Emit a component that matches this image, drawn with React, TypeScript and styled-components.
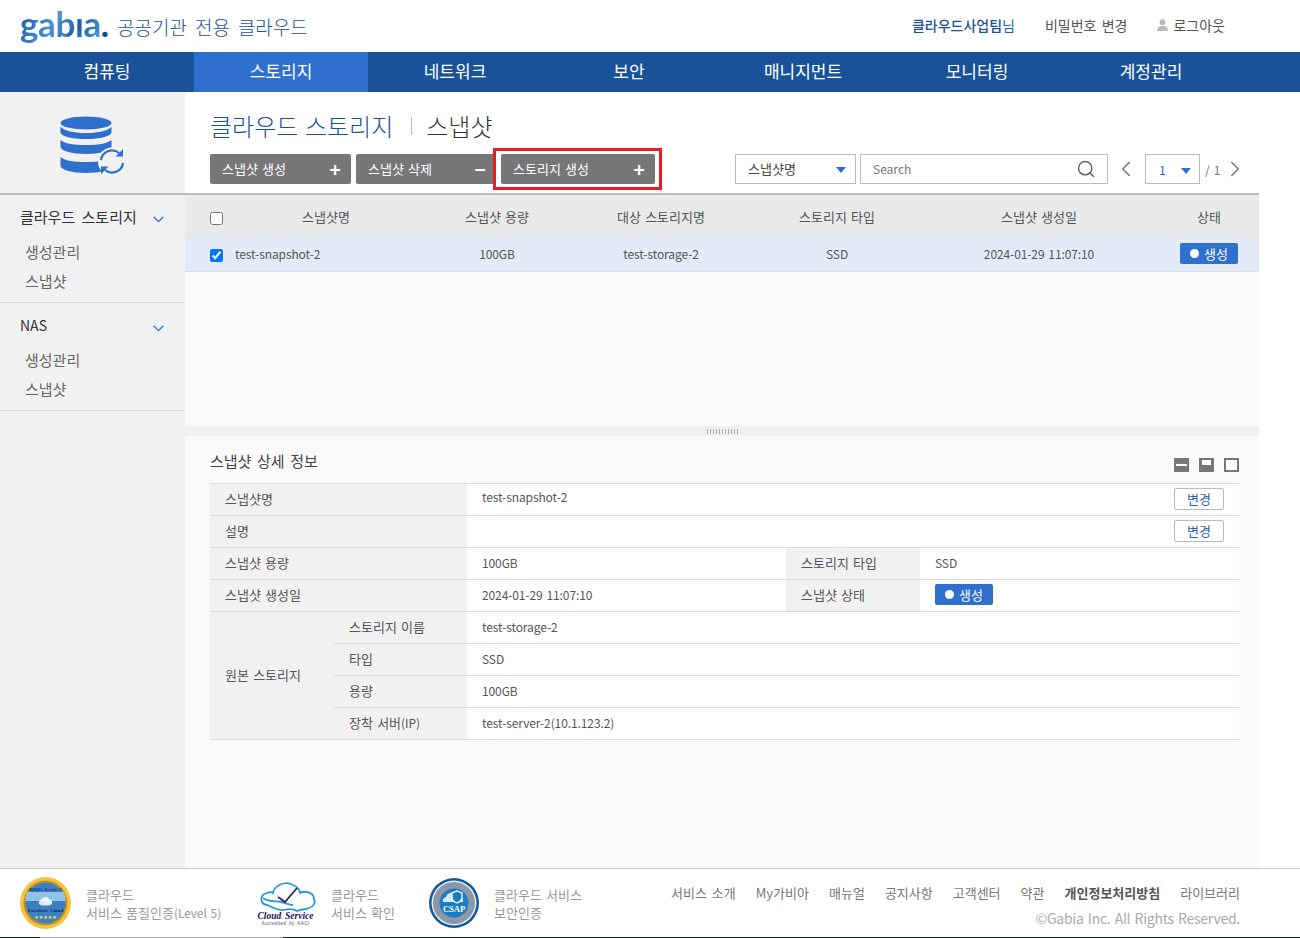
import styled, { createGlobalStyle } from "styled-components";
import { ChevronLeft, ChevronRight, Search } from "lucide-react";

const menus = ["컴퓨팅", "스토리지", "네트워크", "보안", "매니지먼트", "모니터링", "계정관리"];
const sideGroups = ["클라우드 스토리지", "NAS"];
const footerLinks = ["서비스 소개", "My가비아", "매뉴얼", "공지사항", "고객센터", "약관", "개인정보처리방침", "라이브러리"];

const App = () => {
  return (
    <Page>
      <GlobalStyle />
      <Header>
        <Logo>
          <LogoWord>gabıa</LogoWord>
          <LogoDot>.</LogoDot>
        </Logo>
        <SiteName>공공기관 전용 클라우드</SiteName>
        <UserMenu>
          <UserName>
            <b>클라우드사업팀</b>님
          </UserName>
          <UserLink>비밀번호 변경</UserLink>
          <UserLink>
            <UserIcon />
            로그아웃
          </UserLink>
        </UserMenu>
      </Header>

      <Nav>
        {menus.map((menu) => (
          <NavItem key={menu} $active={menu === "스토리지"}>
            {menu}
          </NavItem>
        ))}
      </Nav>

      <Body>
        <Sidebar>
          <SideTop>
            <StorageIcon />
          </SideTop>
          {sideGroups.map((group) => (
            <SideGroup key={group}>
              <SideTitle $latin={group === "NAS"}>
                {group}
                <SideChevron viewBox="0 0 11 7">
                  <path d="M.7.8 5.5 5.6 10.3.8" />
                </SideChevron>
              </SideTitle>
              <SideItem>생성관리</SideItem>
              <SideItem>스냅샷</SideItem>
            </SideGroup>
          ))}
        </Sidebar>

        <Main>
          <TopBar>
            <PageTitle>
              클라우드 스토리지<TitleBar />
              <TitleCurrent>스냅샷</TitleCurrent>
            </PageTitle>
            <Toolbar>
              <ActionButton>
                스냅샷 생성<ActionSign>+</ActionSign>
              </ActionButton>
              <ActionButton>
                스냅샷 삭제<ActionSign>−</ActionSign>
              </ActionButton>
              <ActionButton $wide $marked>
                스토리지 생성<ActionSign>+</ActionSign>
              </ActionButton>
              <SearchType>
                스냅샷명
                <Caret />
              </SearchType>
              <SearchBox>
                <SearchInput placeholder="Search" />
                <Search size={20} color="#666" strokeWidth={1.8} />
              </SearchBox>
              <PagerArrow $left>
                <ChevronLeft size={26} strokeWidth={1.4} />
              </PagerArrow>
              <PageSelect>
                <Latin>1</Latin>
                <Caret />
              </PageSelect>
              <PageTotal>/ 1</PageTotal>
              <PagerArrow>
                <ChevronRight size={26} strokeWidth={1.4} />
              </PagerArrow>
            </Toolbar>
          </TopBar>

          <ListPane>
            <HeadRow>
              <CheckCell>
                <input type="checkbox" />
              </CheckCell>
              <span>스냅샷명</span>
              <span>스냅샷 용량</span>
              <span>대상 스토리지명</span>
              <span>스토리지 타입</span>
              <span>스냅샷 생성일</span>
              <span>상태</span>
            </HeadRow>
            <DataRow>
              <CheckCell>
                <input type="checkbox" defaultChecked />
              </CheckCell>
              <NameCell>test-snapshot-2</NameCell>
              <Latin>100GB</Latin>
              <Latin>test-storage-2</Latin>
              <Latin>SSD</Latin>
              <Latin>2024-01-29 11:07:10</Latin>
              <span>
                <StatusBadge>생성</StatusBadge>
              </span>
            </DataRow>
          </ListPane>

          <Splitter>
            <SplitterDots />
          </Splitter>

          <DetailPane>
            <DetailHead>
              <DetailTitle>스냅샷 상세 정보</DetailTitle>
              <PaneButtons>
                <PaneIcon viewBox="0 0 15 14">
                  <path d="M0 0h15v14H0z" fill="#777" />
                  <path d="M2 6h11v2H2z" fill="#fff" />
                </PaneIcon>
                <PaneIcon viewBox="0 0 15 14">
                  <path d="M0 0h15v14H0z" fill="#777" />
                  <path d="M3 2h9v5H3z" fill="#fff" />
                </PaneIcon>
                <PaneIcon viewBox="0 0 15 14">
                  <path d="M0 0h15v14H0z" fill="#777" />
                  <path d="M2 2h11v10H2z" fill="#fff" />
                </PaneIcon>
              </PaneButtons>
            </DetailHead>
            <DetailTable>
              <colgroup>
                <col width={123} />
                <col width={134} />
                <col width={319} />
                <col width={134} />
                <col width={319} />
              </colgroup>
              <tbody>
                <tr>
                  <th colSpan={2}>스냅샷명</th>
                  <td colSpan={3}>
                    <ValueLine>
                      <TopValue>test-snapshot-2</TopValue>
                      <ChangeButton>변경</ChangeButton>
                    </ValueLine>
                  </td>
                </tr>
                <tr>
                  <th colSpan={2}>설명</th>
                  <td colSpan={3}>
                    <ValueLine>
                      <span />
                      <ChangeButton>변경</ChangeButton>
                    </ValueLine>
                  </td>
                </tr>
                <tr>
                  <th colSpan={2}>스냅샷 용량</th>
                  <td>
                    <Latin>100GB</Latin>
                  </td>
                  <th>스토리지 타입</th>
                  <td>
                    <Latin>SSD</Latin>
                  </td>
                </tr>
                <tr>
                  <th colSpan={2}>스냅샷 생성일</th>
                  <td>
                    <Latin>2024-01-29 11:07:10</Latin>
                  </td>
                  <th>스냅샷 상태</th>
                  <td>
                    <StatusBadge>생성</StatusBadge>
                  </td>
                </tr>
                <tr>
                  <th rowSpan={4}>원본 스토리지</th>
                  <SubHead>스토리지 이름</SubHead>
                  <td colSpan={3}>
                    <Latin>test-storage-2</Latin>
                  </td>
                </tr>
                <tr>
                  <SubHead>타입</SubHead>
                  <td colSpan={3}>
                    <Latin>SSD</Latin>
                  </td>
                </tr>
                <tr>
                  <SubHead>용량</SubHead>
                  <td colSpan={3}>
                    <Latin>100GB</Latin>
                  </td>
                </tr>
                <tr>
                  <SubHead>
                    장착 서버<Latin>(IP)</Latin>
                  </SubHead>
                  <td colSpan={3}>
                    <Latin>test-server-2(10.1.123.2)</Latin>
                  </td>
                </tr>
              </tbody>
            </DetailTable>
          </DetailPane>
        </Main>
      </Body>

      <Footer>
        <Cert $width={235}>
          <QualityBadge />
          <CertText>
            클라우드
            <br />
            서비스 품질인증<Latin>(Level 5)</Latin>
          </CertText>
        </Cert>
        <Cert $width={174}>
          <CloudServiceBadge />
          <CertText>
            클라우드
            <br />
            서비스 확인
          </CertText>
        </Cert>
        <Cert $width={220}>
          <CsapBadge />
          <CertText>
            클라우드 서비스
            <br />
            보안인증
          </CertText>
        </Cert>
        <FooterRight>
          <FooterLinks>
            {footerLinks.map((link) => (
              <FooterLink key={link} $strong={link === "개인정보처리방침"}>
                {link}
              </FooterLink>
            ))}
          </FooterLinks>
          <Copyright>©Gabia Inc. All Rights Reserved.</Copyright>
        </FooterRight>
      </Footer>
      <BottomEdge />
    </Page>
  );
};

export default App;

const UserIcon = () => (
  <UserGlyph viewBox="0 0 11 12">
    <circle cx="5.5" cy="3.2" r="2.9" />
    <path d="M0 12c0-3.4 2-5 5.5-5S11 8.600 11 12z" />
  </UserGlyph>
);

const StorageIcon = () => (
  <svg width="66" height="60" viewBox="0 0 66 60">
    <g fill="#2f6fce">
      <ellipse cx="26" cy="7" rx="25.500" ry="6.500" />
      <path d="M.5 10.500c3 4 12 6.500 25.500 6.500s22.500-2.500 25.500-6.500v6c-1 4-11 6.500-25.500 6.500S1.500 20.500.5 16.500z" />
      <path d="M.5 24c3 3 12 5 25.500 5s22.500-2 25.500-5v7c-1 4-11 7-25.500 7S1.500 35 .5 31z" />
      <path d="M.5 41c3 3 12 5 25.500 5s22.500-2 25.500-5v9c-1 4-11 7-25.500 7S1.500 54 .5 50z" />
    </g>
    <circle cx="52" cy="45.500" r="14" fill="#f1f1f1" />
    <g fill="none" stroke="#2f6fce" strokeWidth="2.200">
      <path d="M41 44a11 11 0 0 1 18-7" />
      <path d="M63 47a11 11 0 0 1-18 7" />
    </g>
    <path d="M63 33v7.500h-7.500zM41 58v-7.500h7.500z" fill="#2f6fce" />
  </svg>
);

const QualityBadge = () => (
  <svg width="51" height="52" viewBox="0 0 51 52">
    <ellipse cx="25.500" cy="26" rx="25.500" ry="26" fill="#f3c53c" />
    <ellipse cx="25.500" cy="26" rx="22" ry="22.500" fill="#c98f1c" />
    <ellipse cx="25.500" cy="26" rx="20" ry="20.500" fill="#3b7fc4" />
    <path d="M7 15h37a20 20 0 0 1 1.500 9H5.500a20 20 0 0 1 1.500-9z" fill="#8fc3e8" />
    <text x="25.500" y="14" textAnchor="middle" fontSize="5" fontFamily="Liberation Serif" fontWeight="700" fill="#12306a">
      KIQC Level 5
    </text>
    <path d="M19 27a4 4 0 0 1 3-5 4 4 0 0 1 7 0 4 4 0 0 1 3 5c-2 2-11 2-13 0z" fill="#fff" opacity=".85" />
    <text x="25.500" y="35" textAnchor="middle" fontSize="5" fontFamily="Liberation Serif" fontWeight="700" fill="#0e2a5e">
      Excellent Cloud
    </text>
    <text x="25.500" y="42" textAnchor="middle" fontSize="5" fill="#ffe34a" fontFamily="DejaVu Sans">
      ★★★★★
    </text>
  </svg>
);

const CloudServiceBadge = () => (
  <svg width="61" height="46" viewBox="0 0 61 46">
    <g fill="none" stroke="#2a9ad6" strokeWidth="1.800" transform="translate(4 1)">
      <path d="M8 24c-7-1-8-10 0-12 2-1 5-1 6 0 1-7 12-13 20-8 5 2 7 6 7 8 6-3 14 0 14 6 2 4-1 8-5 9-3 2-9 1-12 3-5-3-9-2-13-1-5 1-12-3-17-5z" />
      <path d="M4 17c5 4 12 3 18 4 5 1 8 3 12 3" />
    </g>
    <path d="M23 17l7 5L42 8" fill="none" stroke="#2d1f6e" strokeWidth="1.700" />
    <text x="30.500" y="39" textAnchor="middle" fontSize="9.500" fontFamily="Liberation Serif" fontStyle="italic" fontWeight="700" fill="#20135f">
      Cloud Service
    </text>
    <text x="30.500" y="45" textAnchor="middle" fontSize="4.600" fontFamily="Liberation Sans" fill="#555" letterSpacing=".3">
      Accredited by KACI
    </text>
  </svg>
);

const CsapBadge = () => (
  <svg width="50" height="50" viewBox="0 0 50 50">
    <circle cx="25" cy="25" r="25" fill="#12579f" />
    <circle cx="25" cy="25" r="22.500" fill="#e6ebf1" />
    <circle cx="25" cy="25" r="21" fill="#8d98a6" />
    <circle cx="25" cy="25" r="14.500" fill="#1c7dc4" />
    <path d="M14 24a4 4 0 0 1 3-5 6 6 0 0 1 11-1 5 5 0 0 1 6 6z" fill="#d6e9f7" />
    <path d="M28 13l5 2v4c0 3-2 5-5 6-3-1-5-3-5-6v-4z" fill="#1c7dc4" stroke="#fff" strokeWidth="1.200" />
    <text x="25" y="34" textAnchor="middle" fontSize="8.500" fontWeight="700" fontFamily="Liberation Serif" fill="#fff">
      CSAP
    </text>
  </svg>
);

const GlobalStyle = createGlobalStyle`
  html, body {
    margin: 0;
    padding: 0;
    background: #fff;
  }

  body {
    font-family: "Noto Sans CJK KR", "Noto Sans", sans-serif;
    font-size: 13px;
    color: #444;
    word-spacing: 0.1em;
  }

  * {
    box-sizing: border-box;
  }

  input[type="checkbox"] {
    width: 13px;
    height: 13px;
    margin: 0;
  }
`;

const Latin = styled.span`
  font-size: 12px;
  letter-spacing: -0.1px;
`;

const TopValue = styled(Latin)`
  margin-bottom: 4px;
`;

const Page = styled.div`
  width: 1300px;
  height: 938px;
  display: flex;
  flex-direction: column;
  overflow: hidden;
`;

const Header = styled.header`
  height: 52px;
  flex: none;
  display: flex;
  align-items: center;
  padding: 0 75px 0 20px;
`;

const Logo = styled.div`
  width: 97px;
  display: flex;
  align-items: baseline;
  font-family: Lato, sans-serif;
  font-size: 35px;
  line-height: 44px;
  font-weight: 700;
  letter-spacing: -0.4px;
  margin-top: -6px;
`;

const LogoWord = styled.span`
  background: repeating-linear-gradient(45deg, rgba(255, 255, 255, 0.12) 0 1px, transparent 1px 2px),
    linear-gradient(120deg, #0b4693, #3f8ccf 45%, #14589f 70%, #4f9bd9);
  -webkit-background-clip: text;
  background-clip: text;
  color: transparent;
`;

const LogoDot = styled.span`
  color: #124a90;
`;

const SiteName = styled.div`
  font-size: 19px;
  color: #1a5299;
  font-weight: 300;
  word-spacing: 0.2em;
`;

const UserMenu = styled.div`
  margin: -2px 0 0 auto;
  display: flex;
  align-items: center;
  gap: 30px;
  font-size: 14px;
  word-spacing: 0.15em;
`;

const UserName = styled.span`
  color: #1a5fb0;

  b {
    font-weight: 500;
    color: #1a5299;
  }
`;

const UserLink = styled.span`
  display: flex;
  align-items: center;
  color: #555;
`;

const UserGlyph = styled.svg`
  width: 11px;
  height: 12px;
  margin-right: 5px;
  fill: #b9b9b9;
`;

const Nav = styled.nav`
  height: 40px;
  flex: none;
  display: flex;
  padding-left: 20px;
  background: #1a5299;
`;

const NavItem = styled.a<{ $active?: boolean }>`
  width: 174px;
  padding-bottom: 3px;
  display: flex;
  align-items: center;
  justify-content: center;
  font-size: 17px;
  color: #fff;
  background: ${({ $active }) => ($active ? "#2f6fce" : "transparent")};
`;

const Body = styled.div`
  flex: 1;
  min-height: 0;
  display: flex;
`;

const Sidebar = styled.aside`
  width: 185px;
  background: #f1f1f1;
`;

const SideTop = styled.div`
  height: 103px;
  display: flex;
  justify-content: center;
  padding: 24px 0 0 1px;
  border-bottom: 2px solid #bbb;
`;

const SideGroup = styled.div`
  height: 108px;
  padding-bottom: 7px;
  border-bottom: 1px solid #ddd;
`;

const SideTitle = styled.div<{ $latin?: boolean }>`
  height: 44px;
  display: flex;
  align-items: center;
  justify-content: space-between;
  padding: 0 21px ${({ $latin }) => ($latin ? "0" : "2px")} 20px;
  font-size: ${({ $latin }) => ($latin ? "14px" : "15px")};
  word-spacing: 0.2em;
  color: #333;
`;

const SideChevron = styled.svg`
  width: 11px;
  height: 7px;
  margin-top: 6px;
  fill: none;
  stroke: #2f6fce;
  stroke-width: 1.300;
`;

const SideItem = styled.div`
  height: 29px;
  display: flex;
  align-items: center;
  padding: 0 0 5px 25px;
  font-size: 15px;
  color: #666;
`;

const Main = styled.main`
  width: 1074px;
  display: flex;
  flex-direction: column;
  background: #fafafa;
`;

const TopBar = styled.div`
  height: 103px;
  flex: none;
  background: #fff;
  padding: 15px 10px 0 25px;
  border-bottom: 2px solid #bbb;
`;

const PageTitle = styled.h1`
  margin: 0;
  height: 36px;
  display: flex;
  align-items: center;
  font-size: 24px;
  font-weight: 300;
  color: #1a5299;
`;

const TitleBar = styled.i`
  width: 1px;
  height: 18px;
  margin: 2px 14px 0 18px;
  background: #bbb;
`;

const TitleCurrent = styled.span`
  color: #333;
`;

const Toolbar = styled.div`
  margin-top: 11px;
  display: flex;
  align-items: center;
  white-space: nowrap;

  > * {
    flex: none;
  }
`;

const ActionButton = styled.button<{ $wide?: boolean; $marked?: boolean }>`
  position: relative;
  width: ${({ $wide }) => ($wide ? "154px" : "141px")};
  height: 30px;
  margin-right: ${({ $wide }) => ($wide ? "80px" : "5px")};
  padding: 0 9px 2px 12px;
  display: flex;
  align-items: center;
  justify-content: space-between;
  border: 0;
  border-radius: 2px;
  background: #777;
  color: #fff;
  font: inherit;
  word-spacing: inherit;

  &:nth-child(2) {
    width: 140px;
  }

  ${({ $marked }) =>
    $marked &&
    `
    &::after {
      content: "";
      position: absolute;
      inset: -6px -7px -6px -8px;
      border: 3px solid #ec1c24;
    }
  `}
`;

const ActionSign = styled.span`
  width: 14px;
  text-align: center;
  font-size: 19px;
  font-weight: 700;
  line-height: 1;
`;

const SearchType = styled.div`
  width: 121px;
  height: 30px;
  display: flex;
  align-items: center;
  justify-content: space-between;
  padding: 0 9px 2px 12px;
  margin-right: 4px;
  background: #fff;
  border: 1px solid #bbb;
`;

const Caret = styled.i`
  width: 0;
  height: 0;
  margin-top: 3px;
  border-style: solid;
  border-width: 6px 5px 0;
  border-color: #2f6fce transparent transparent;
`;

const SearchBox = styled.div`
  width: 248px;
  height: 30px;
  display: flex;
  align-items: center;
  padding: 0 11px 0 12px;
  background: #fff;
  border: 1px solid #bbb;
`;

const SearchInput = styled.input`
  flex: 1;
  min-width: 0;
  height: 24px;
  margin-bottom: 2px;
  border: 0;
  padding: 0;
  outline: 0;
  font-family: inherit;
  font-size: 12px;

  &::placeholder {
    color: #777;
  }
`;

const PagerArrow = styled.span<{ $left?: boolean }>`
  display: flex;
  color: #777;
  margin: ${({ $left }) => ($left ? "0 6px 0 5px" : "0 0 0 2px")};
`;

const PageSelect = styled.div`
  width: 55px;
  height: 30px;
  display: flex;
  align-items: center;
  justify-content: space-between;
  padding: 0 8px 0 13px;
  background: #fff;
  border: 1px solid #bbb;
  color: #2a66b8;
`;

const PageTotal = styled.span`
  margin-left: 5px;
  font-size: 12px;
  color: #777;
`;

const ListPane = styled.section`
  height: 231px;
  flex: none;
`;

const HeadRow = styled.div`
  height: 44px;
  padding-bottom: 2px;
  display: grid;
  grid-template-columns: 40px 202px 140px 188px 164px 240px 100px;
  align-items: center;
  text-align: center;
  background: #e9e9e9;
  color: #555;
`;

const DataRow = styled(HeadRow)`
  height: 33px;
  padding-bottom: 3px;
  background: #e4ebf8;
  border-bottom: 1px solid #dcdfe6;
`;

const CheckCell = styled.span`
  display: flex;
  padding-left: 25px;
  margin-top: 4px;
`;

const NameCell = styled(Latin)`
  text-align: left;
  padding-left: 10px;
`;

const StatusBadge = styled.span`
  width: 58px;
  height: 21px;
  padding-bottom: 1px;
  display: inline-flex;
  align-items: center;
  justify-content: center;
  gap: 5px;
  border-radius: 2px;
  background: #2f6fce;
  color: #fff;
  vertical-align: middle;

  &::before {
    content: "";
    width: 9px;
    height: 9px;
    margin-top: 1px;
    border-radius: 50%;
    background: #fff;
  }
`;

const Splitter = styled.div`
  height: 10px;
  flex: none;
  display: flex;
  align-items: center;
  justify-content: center;
  background: #f1f1f1;
`;

const SplitterDots = styled.i`
  width: 32px;
  height: 5px;
  background-image: radial-gradient(circle, #999 0.8px, transparent 0.9px);
  background-size: 3px 2.500px;
`;

const DetailPane = styled.section`
  flex: 1;
  padding: 0 20px 0 25px;
`;

const DetailHead = styled.div`
  height: 47px;
  display: flex;
  align-items: center;
  justify-content: space-between;
  padding-top: 6px;
`;

const DetailTitle = styled.h2`
  margin: 0 0 5px;
  font-size: 15px;
  font-weight: 400;
  word-spacing: 0.15em;
  color: #444;
`;

const PaneButtons = styled.div`
  display: flex;
  gap: 10px;
  margin-top: 4px;
`;

const PaneIcon = styled.svg`
  width: 15px;
  height: 14px;
`;

const DetailTable = styled.table`
  width: 1029px;
  table-layout: fixed;
  border-collapse: collapse;
  border-top: 1px solid #ddd;

  th,
  td {
    height: 32px;
    padding: 0 0 2px 15px;
    border-bottom: 1px solid #ddd;
    font-weight: 400;
    text-align: left;
  }

  th {
    background: #f1f1f1;
    color: #555;
  }

  td {
    background: #fff;
    color: #555;
  }
`;

const SubHead = styled.th`
  && {
    padding-left: 16px;
  }
`;

const ValueLine = styled.div`
  display: flex;
  align-items: center;
  justify-content: space-between;
  padding-right: 15px;
`;

const ChangeButton = styled.button`
  width: 50px;
  height: 22px;
  padding: 0;
  background: #fff;
  border: 1px solid #bbb;
  border-radius: 2px;
  color: #2a5fb0;
  font: inherit;
`;

const Footer = styled.footer`
  height: 69px;
  flex: none;
  display: flex;
  align-items: center;
  padding: 0 60px 0 20px;
  background: #fff;
  border-top: 1px solid #ccc;
`;

const Cert = styled.div<{ $width: number }>`
  width: ${({ $width }) => $width}px;
  flex: none;
  display: flex;
  align-items: center;
  gap: 15px;
`;

const CertText = styled.p`
  margin: 0;
  padding-top: 1px;
  line-height: 18px;
  color: #999;
`;

const FooterRight = styled.div`
  margin: 5px 0 0 auto;
  display: flex;
  flex-direction: column;
  align-items: flex-end;
  gap: 6px;
`;

const FooterLinks = styled.div`
  display: flex;
  gap: 20px;
  word-spacing: 0.15em;
`;

const FooterLink = styled.a<{ $strong?: boolean }>`
  color: ${({ $strong }) => ($strong ? "#555" : "#777")};
  font-weight: ${({ $strong }) => ($strong ? 700 : 400)};
`;

const Copyright = styled.div`
  font-size: 14px;
  letter-spacing: -0.25px;
  color: #aaa;
`;

const BottomEdge = styled.div`
  height: 1px;
  flex: none;
  background: linear-gradient(to right, #14281c 40px, #aaa 40px, #aaa 283px, #14281c 283px);
`;
